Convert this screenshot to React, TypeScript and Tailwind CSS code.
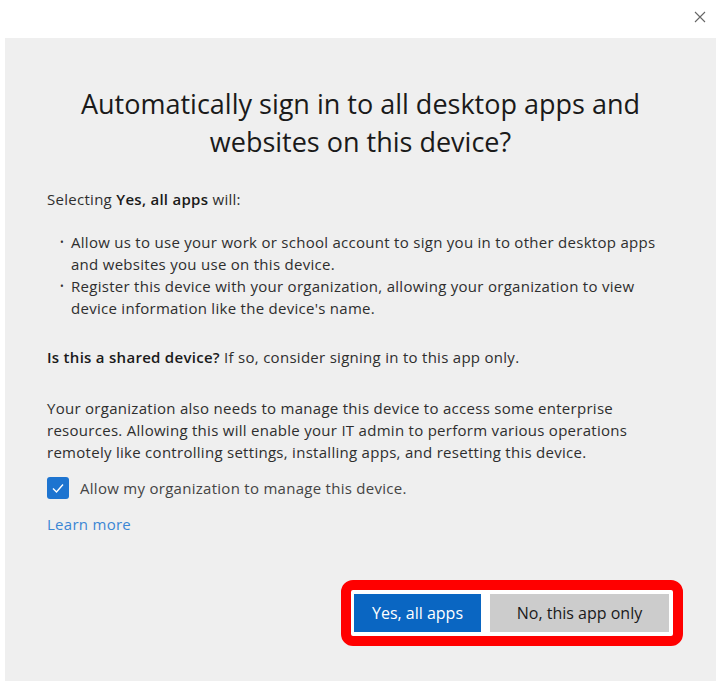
export default function App() {
  const font = { fontFamily: '"Open Sans", "Noto Sans", sans-serif' }
  return (
    <div className="w-[720px] h-[684px] bg-white flex flex-col text-[#2e2e2e]" style={font}>
      <header className="h-[38px] flex items-start justify-end pr-[14px] pt-[11px]">
        <svg width="12" height="12" viewBox="0 0 12 12" className="text-[#666]">
          <path d="M1 1 L11 11 M11 1 L1 11" stroke="currentColor" strokeWidth="1.1" fill="none" />
        </svg>
      </header>

      <main className="ml-[5px] mr-[4px] h-[643px] bg-[#efefef] px-[42px] flex flex-col text-[15px] leading-[22px] tracking-[0.28px]">
        <h1 className="mt-[47px] text-center text-[27px] leading-[38px] tracking-normal text-[#1a1a1a]">
          Automatically sign in to all desktop apps and
          <br />
          websites on this device?
        </h1>

        <p className="mt-[27px]">
          Selecting <b className="font-semibold text-[#1a1a1a]">Yes, all apps</b> will:
        </p>

        <ul className="mt-[21px] pl-[13px]">
          <li className="flex">
            <span className="w-[11px] shrink-0 text-[10px]">•</span>
            <span>
              Allow us to use your work or school account to sign you in to other desktop apps
              <br />
              and websites you use on this device.
            </span>
          </li>
          <li className="flex">
            <span className="w-[11px] shrink-0 text-[10px]">•</span>
            <span>
              Register this device with your organization, allowing your organization to view
              <br />
              device information like the device's name.
            </span>
          </li>
        </ul>

        <p className="mt-[27px]">
          <b className="font-semibold text-[#1a1a1a]">Is this a shared device?</b> If so, consider signing in to this app only.
        </p>

        <p className="mt-[29px]">
          Your organization also needs to manage this device to access some enterprise
          <br />
          resources. Allowing this will enable your IT admin to perform various operations
          <br />
          remotely like controlling settings, installing apps, and resetting this device.
        </p>

        <label className="mt-[14px] flex items-center gap-[11px] text-[#444]">
          <span className="w-[22px] h-[22px] rounded-[3px] bg-[#1d74d0] flex items-center justify-center">
            <svg width="14" height="14" viewBox="0 0 14 14">
              <path d="M2 7.5 L5.5 11 L12 3.5" stroke="white" strokeWidth="1.4" fill="none" />
            </svg>
          </span>
          Allow my organization to manage this device.
        </label>

        <a className="mt-[14px] text-[#3b86d4] w-fit">Learn more</a>

        <div className="mt-[45px] flex justify-end mr-[-9px]">
          <div className="border-[10px] border-[#ff0000] rounded-[12px] bg-white pl-[3px] pr-[4px] py-[4px] flex gap-[9px]">
            <button className="w-[127px] h-[38px] bg-[#0a66c2] text-white text-[16px] tracking-normal">Yes, all apps</button>
            <button className="w-[179px] h-[38px] bg-[#cccccc] text-[#1a1a1a] text-[16px] tracking-normal">No, this app only</button>
          </div>
        </div>
      </main>
    </div>
  )
}
